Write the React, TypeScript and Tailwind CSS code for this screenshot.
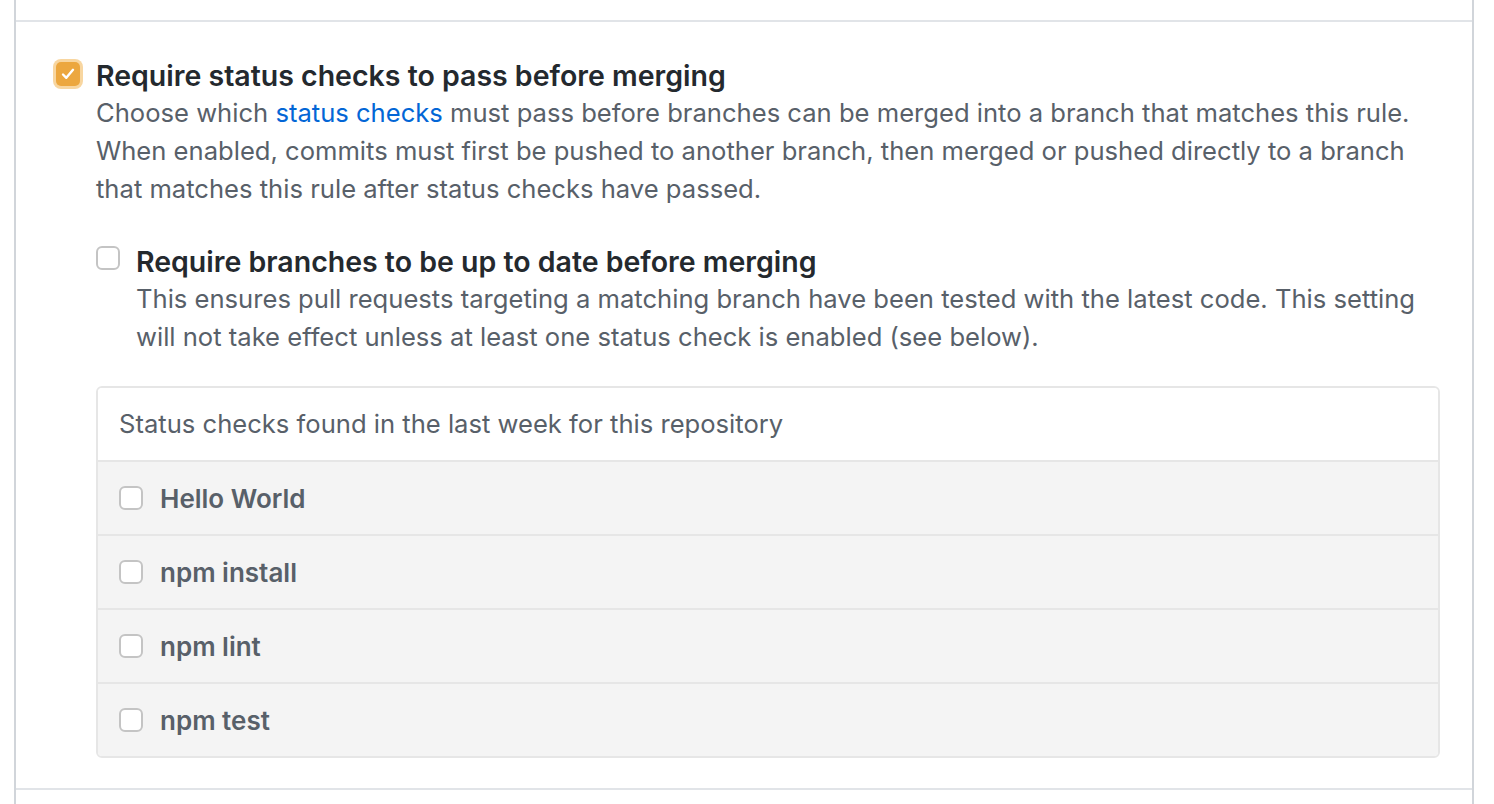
import React from 'react'

const font = { fontFamily: 'Inter, "Noto Sans", sans-serif' }

function Box({ checked }: { checked?: boolean }) {
  if (checked) {
    return (
      <span className="flex h-[30px] w-[30px] shrink-0 items-center justify-center rounded-[8px] bg-[#f8d6a0]">
        <span className="flex h-[24px] w-[24px] items-center justify-center rounded-[5px] bg-[#eca73f]">
          <svg width="16" height="16" viewBox="0 0 16 16" fill="none">
            <path d="M3 8.5 L6.3 11.8 L13 3.8" stroke="white" strokeWidth="2.4" strokeLinecap="round" strokeLinejoin="round" />
          </svg>
        </span>
      </span>
    )
  }
  return <span className="block h-[24px] w-[24px] shrink-0 rounded-[6px] border-2 border-[#c4c4c4] bg-white" />
}

export default function App() {
  const checks = ['Hello World', 'npm install', 'npm lint', 'npm test']

  return (
    <div className="h-[804px] w-[1494px] overflow-hidden bg-white" style={font}>
      <div className="ml-[14px] mr-[20px] h-full border-x-2 border-[#d1d5da] pt-[20px]">
        <div className="border-y-2 border-[#e1e4e8] pb-[30px] pl-[37px] pr-[32px] pt-[36px]">
          <div className="flex gap-[13px]">
            <div className="pt-[1px]">
              <Box checked />
            </div>
            <div className="flex-1">
              <div className="text-[28.5px] font-semibold leading-[36px] text-[#24292e]">
                Require status checks to pass before merging
              </div>
              <p className="text-[25.6px] leading-[38px] text-[#586069]">
                Choose which <span className="text-[#0366d6]">status checks</span> must pass before branches can be merged into a branch that matches this rule. When enabled, commits must first be pushed to another branch, then merged or pushed directly to a branch that matches this rule after status checks have passed.
              </p>

              <div className="mt-[36px] flex gap-[16px]">
                <div className="pt-[2px]">
                  <Box />
                </div>
                <div className="flex-1">
                  <div className="text-[28.5px] font-semibold leading-[36px] text-[#24292e]">
                    Require branches to be up to date before merging
                  </div>
                  <p className="text-[25.6px] leading-[38px] text-[#586069]">
                    This ensures pull requests targeting a matching branch have been tested with the latest code. This setting will not take effect unless at least one status check is enabled (see below).
                  </p>
                </div>
              </div>

              <div className="mt-[30px] overflow-hidden rounded-[6px] border-2 border-[#e6e6e6]">
                <div className="flex h-[72px] items-center bg-white px-[21px] text-[25.6px] text-[#586069]">
                  Status checks found in the last week for this repository
                </div>
                {checks.map((name) => (
                  <div key={name} className="flex h-[74px] items-center gap-[17px] border-t-2 border-[#e6e6e6] bg-[#f4f4f4] px-[21px]">
                    <Box />
                    <span className="text-[26px] font-semibold text-[#586069]">{name}</span>
                  </div>
                ))}
              </div>
            </div>
          </div>
        </div>
      </div>
    </div>
  )
}
